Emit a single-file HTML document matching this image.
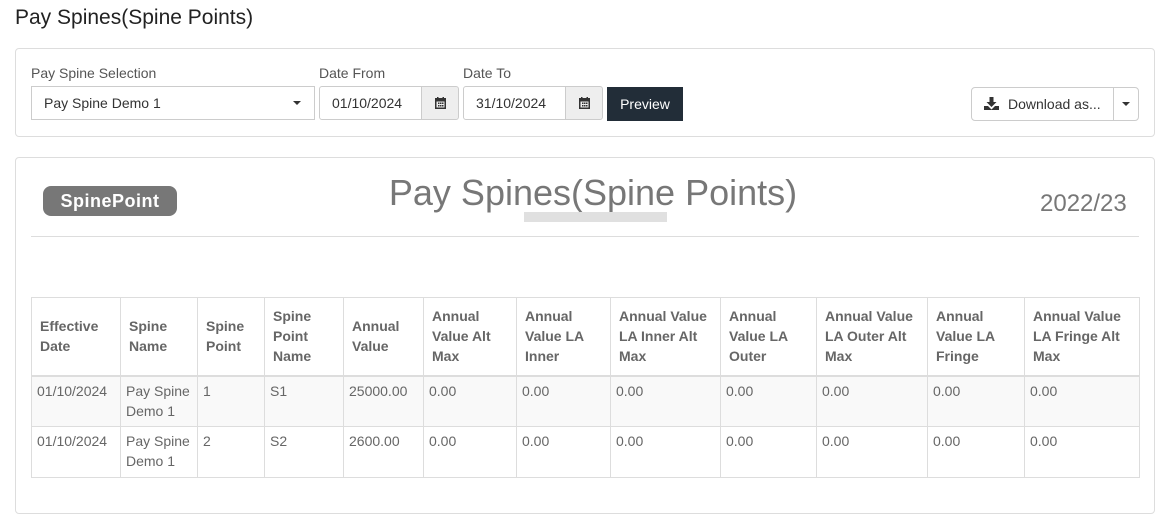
<!DOCTYPE html>
<html><head><style>
*{box-sizing:border-box;margin:0;padding:0}
body{width:1161px;height:528px;background:#fff;font-family:"Liberation Sans",Arial,sans-serif;color:#333;position:relative;overflow:hidden}
.a{position:absolute}
.panel{position:absolute;border:1px solid #ddd;border-radius:4px;background:#fff}
.lbl{position:absolute;font-size:14px;color:#555}
.inp{position:absolute;border:1px solid #ccc;height:34px;font-size:14px;color:#333;line-height:32px;padding-left:12px;background:#fff}
.addon{position:absolute;border:1px solid #ccc;height:34px;background:#eee;width:38px}
table{position:absolute;left:31px;top:297px;border-collapse:collapse;font-size:14px;width:1108px;table-layout:fixed}
td,th{border:1px solid #ddd;padding:0 8px;line-height:20px;text-align:left}
th{color:#666;font-weight:bold;height:78px;vertical-align:middle;border-bottom:2px solid #ddd}
td{color:#666;vertical-align:top;padding:4px 2px 0 5px;height:51px;overflow:hidden}
tr.s td{background:#f9f9f9}
</style></head><body>
<div class="a" style="left:15px;top:6px;font-size:21px;color:#222">Pay Spines(Spine Points)</div>

<div class="panel" style="left:15px;top:48px;width:1140px;height:89px"></div>
<div class="lbl" style="left:31px;top:65px">Pay Spine Selection</div>
<div class="lbl" style="left:319px;top:65px">Date From</div>
<div class="lbl" style="left:463px;top:65px">Date To</div>
<div class="inp" style="left:31px;top:86px;width:284px">Pay Spine Demo 1</div>
<div class="a" style="left:293px;top:101px;border-left:4px solid transparent;border-right:4px solid transparent;border-top:4px solid #333"></div>
<div class="inp" style="left:319px;top:86px;width:104px;border-radius:3px 0 0 3px">01/10/2024</div>
<div class="addon" style="left:421px;top:86px;border-radius:0 3px 3px 0"></div>
<div class="inp" style="left:463px;top:86px;width:104px;border-radius:3px 0 0 3px">31/10/2024</div>
<div class="addon" style="left:565px;top:86px;border-radius:0 3px 3px 0"></div>
<svg class="a" style="left:435px;top:97px" width="11" height="12"><rect x="0" y="1" width="11" height="11" fill="#333"/><rect x="1.5" y="4.5" width="8" height="6" fill="#eee"/><g fill="#333"><rect x="3" y="5.5" width="1.5" height="1.5"/><rect x="5" y="5.5" width="1.5" height="1.5"/><rect x="7" y="5.5" width="1.5" height="1.5"/><rect x="3" y="8" width="1.5" height="1.5"/><rect x="5" y="8" width="1.5" height="1.5"/><rect x="7" y="8" width="1.5" height="1.5"/></g><rect x="2" y="0" width="1.5" height="2.5" fill="#333"/><rect x="7.5" y="0" width="1.5" height="2.5" fill="#333"/></svg>
<svg class="a" style="left:579px;top:97px" width="11" height="12"><rect x="0" y="1" width="11" height="11" fill="#333"/><rect x="1.5" y="4.5" width="8" height="6" fill="#eee"/><g fill="#333"><rect x="3" y="5.5" width="1.5" height="1.5"/><rect x="5" y="5.5" width="1.5" height="1.5"/><rect x="7" y="5.5" width="1.5" height="1.5"/><rect x="3" y="8" width="1.5" height="1.5"/><rect x="5" y="8" width="1.5" height="1.5"/><rect x="7" y="8" width="1.5" height="1.5"/></g><rect x="2" y="0" width="1.5" height="2.5" fill="#333"/><rect x="7.5" y="0" width="1.5" height="2.5" fill="#333"/></svg>
<div class="a" style="left:607px;top:87px;width:76px;height:34px;background:#222d38;color:#fff;font-size:14px;line-height:34px;text-align:center">Preview</div>

<div class="a" style="left:971px;top:87px;width:168px;height:34px;border:1px solid #ccc;border-radius:4px"></div>
<div class="a" style="left:1113px;top:87px;width:1px;height:34px;background:#ccc"></div>
<svg class="a" style="left:984px;top:97px" width="15" height="13"><path d="M5.5 0h4v5h3l-5 5-5-5h3z" fill="#333"/><path d="M0 9h4l3.5 3.5L11 9h4v4H0z" fill="#333"/></svg>
<div class="a" style="left:1008px;top:96px;font-size:14px;color:#333">Download as...</div>
<div class="a" style="left:1122px;top:102px;border-left:4px solid transparent;border-right:4px solid transparent;border-top:4px solid #333"></div>

<div class="panel" style="left:15px;top:157px;width:1140px;height:357px"></div>
<div class="a" style="left:43px;top:186px;width:134px;height:30px;background:#777;border-radius:8px;color:#fff;font-weight:bold;font-size:18px;line-height:30px;text-align:center;letter-spacing:0.5px">SpinePoint</div>
<div class="a" style="left:360px;top:172px;width:466px;text-align:center;font-size:36px;color:#777">Pay Spines(Spine Points)</div>
<div class="a" style="left:524px;top:212px;width:143px;height:10px;background:#e0e0e0"></div>
<div class="a" style="left:1040px;top:190px;font-size:24px;color:#777">2022/23</div>
<div class="a" style="left:31px;top:236px;width:1108px;height:1px;background:#ddd"></div>

<table>
<colgroup><col style="width:89px"><col style="width:77px"><col style="width:67px"><col style="width:79px"><col style="width:80px"><col style="width:93px"><col style="width:94px"><col style="width:110px"><col style="width:96px"><col style="width:111px"><col style="width:97px"><col style="width:115px"></colgroup>
<tr><th>Effective Date</th><th>Spine Name</th><th>Spine Point</th><th>Spine Point Name</th><th>Annual Value</th><th>Annual Value Alt Max</th><th>Annual Value LA Inner</th><th>Annual Value LA Inner Alt Max</th><th>Annual Value LA Outer</th><th>Annual Value LA Outer Alt Max</th><th>Annual Value LA Fringe</th><th>Annual Value LA Fringe Alt Max</th></tr>
<tr class="s"><td>01/10/2024</td><td>Pay Spine Demo 1</td><td>1</td><td>S1</td><td>25000.00</td><td>0.00</td><td>0.00</td><td>0.00</td><td>0.00</td><td>0.00</td><td>0.00</td><td>0.00</td></tr>
<tr><td>01/10/2024</td><td>Pay Spine Demo 1</td><td>2</td><td>S2</td><td>2600.00</td><td>0.00</td><td>0.00</td><td>0.00</td><td>0.00</td><td>0.00</td><td>0.00</td><td>0.00</td></tr>
</table>
</body></html>
